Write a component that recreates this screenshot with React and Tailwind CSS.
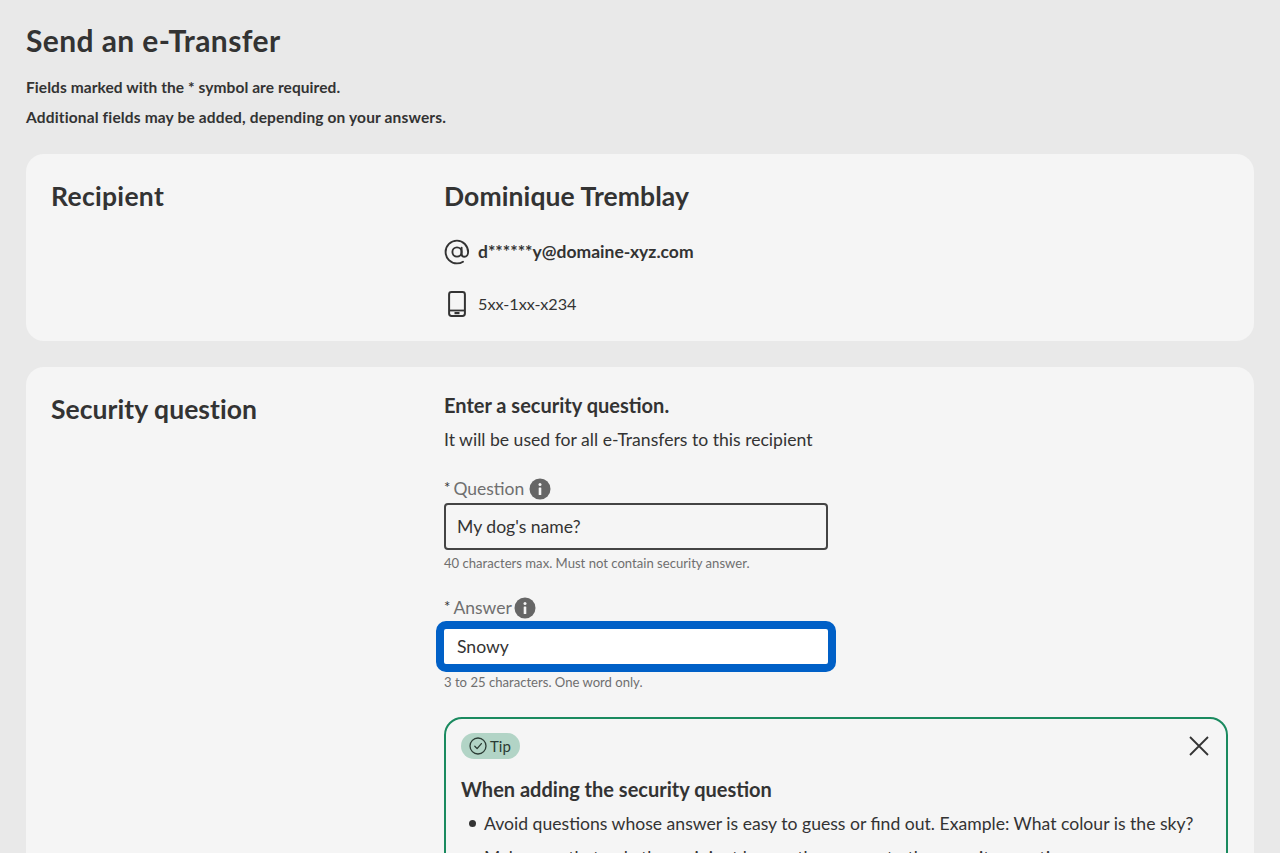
import React from 'react'

const font = { fontFamily: 'Lato, sans-serif' }

const InfoDot = () => (
  <svg width="22" height="22" viewBox="0 0 22 22" className="shrink-0">
    <circle cx="11" cy="11" r="10.5" fill="#666666" />
    <circle cx="11" cy="6.5" r="1.5" fill="#f5f5f5" />
    <rect x="9.7" y="9.5" width="2.6" height="7.5" rx="0.6" fill="#f5f5f5" />
  </svg>
)

const AtIcon = () => (
  <svg width="26" height="26" viewBox="0 0 26 26" fill="none" stroke="#333333" strokeWidth="1.9" strokeLinecap="round">
    <circle cx="13" cy="13" r="4.6" />
    <path d="M17.6 8.6v6.2c0 1.9 1.2 3 2.8 3 2.1 0 3.7-2 3.7-4.8C24.1 6.8 19.1 1.6 13 1.6 6.7 1.6 1.6 6.7 1.6 13S6.7 24.4 13 24.4c2.3 0 4.3-.6 6-1.7" />
  </svg>
)

const PhoneIcon = () => (
  <svg width="18" height="26" viewBox="0 0 18 26" fill="none">
    <rect x="1.1" y="1.1" width="15.8" height="23.8" rx="2.4" stroke="#333333" strokeWidth="2" />
    <path d="M1 19.5h16" stroke="#333333" strokeWidth="1.8" />
    <rect x="6.5" y="21" width="5" height="2.2" fill="#333333" />
  </svg>
)

const TipIcon = () => (
  <svg width="18" height="18" viewBox="0 0 18 18" fill="none" stroke="#2b3b34" strokeWidth="1.3" strokeLinecap="round" strokeLinejoin="round">
    <circle cx="9" cy="9" r="8" />
    <path d="M5.8 9.3l2.3 2.3 4.3-5" />
  </svg>
)

const CloseIcon = () => (
  <svg width="20" height="20" viewBox="0 0 20 20" fill="none" stroke="#333333" strokeWidth="1.8">
    <path d="M1 1l18 18M19 1L1 19" />
  </svg>
)

const Field = ({ label, value, hint, focused }) => (
  <div className="w-[384px]">
    <div className="flex items-center h-[22px] text-[17.5px] text-[#6f6f6f]">
      <span className="text-[#333333] mr-[3px] text-[15px] -mt-[3px]">*</span>
      <span className={focused ? 'mr-[2px]' : 'mr-[5px]'}>{label}</span>
      <InfoDot />
    </div>
    {focused ? (
      <div className="mt-[2px] -mx-[8px] border-[8px] border-[#0060c7] rounded-[10px] bg-white h-[51px] flex items-center pl-[13px] pt-[2px] text-[17.6px] text-[#333333]">
        {value}
      </div>
    ) : (
      <div className="mt-[3px] border-2 border-[#444444] rounded-[4px] h-[47px] flex items-center pl-[11px] pt-[2px] text-[17.6px] text-[#333333]">
        {value}
      </div>
    )}
    <p className={`${focused ? 'mt-[1px]' : 'mt-[4px]'} text-[13.1px] leading-[18px] text-[#6f6f6f]`}>{hint}</p>
  </div>
)

export default function App() {
  return (
    <div className="h-[853px] overflow-hidden bg-[#e9e9e9] px-[26px] text-[#333333]" style={font}>
      <h1 className="pt-[21px] text-[30px] leading-[38px] font-bold tracking-[0.4px]">Send an e-Transfer</h1>
      <p className="mt-[18px] text-[15.5px] leading-[20px] font-bold tracking-[0.07px]">Fields marked with the * symbol are required.</p>
      <p className="mt-[10px] text-[15.5px] leading-[20px] font-bold tracking-[0.15px]">Additional fields may be added, depending on your answers.</p>

      <section className="mt-[27px] h-[187px] bg-[#f5f5f5] rounded-[18px] flex px-[26px] pt-[25px]">
        <h2 className="w-[392px] -ml-px text-[26.5px] leading-[34px] font-bold tracking-[0.3px]">Recipient</h2>
        <div className="ml-px">
          <h3 className="text-[26.5px] leading-[34px] font-bold tracking-[0.1px]">Dominique Tremblay</h3>
          <div className="mt-[26px] flex items-center gap-[8px] h-[26px]">
            <AtIcon />
            <span className="text-[17.5px] font-bold">d******y@domaine-xyz.com</span>
          </div>
          <div className="mt-[26px] flex items-center h-[26px]">
            <span className="w-[34px] pl-[4px] flex"><PhoneIcon /></span>
            <span className="text-[16.2px]">5xx-1xx-x234</span>
          </div>
        </div>
      </section>

      <section className="mt-[26px] bg-[#f5f5f5] rounded-t-[18px] flex px-[26px] pt-[25px] pb-[40px]">
        <h2 className="w-[392px] shrink-0 -ml-px text-[26.5px] leading-[34px] font-bold tracking-[0.05px]">Security question</h2>
        <div className="flex-1 ml-px">
          <h3 className="mt-[1px] text-[20px] leading-[24px] font-bold">Enter a security question.</h3>
          <p className="mt-[11px] text-[17.6px] leading-[24px]">It will be used for all e-Transfers to this recipient</p>

          <div className="mt-[26px]">
            <Field label="Question" value="My dog's name?" hint="40 characters max. Must not contain security answer." />
          </div>
          <div className="mt-[25px]">
            <Field label="Answer" value="Snowy" hint="3 to 25 characters. One word only." focused />
          </div>

          <div className="mt-[26px] border-2 border-[#1a8a5f] rounded-[18px] px-[15px] pt-[14px] pb-[20px]">
            <div className="flex justify-between items-start">
              <span className="inline-flex items-center gap-[3px] h-[26px] pl-[8px] pr-[9px] rounded-full bg-[#b2d4c6] text-[15px] text-[#2b3b34]">
                <TipIcon />
                Tip
              </span>
              <button className="mt-[3px] mr-[2px]"><CloseIcon /></button>
            </div>
            <h4 className="mt-[17px] text-[20px] leading-[26px] font-bold">When adding the security question</h4>
            <ul className="mt-[10px] pl-[8px] text-[17.6px] leading-[24px]">
              <li className="flex items-start gap-[8px]">
                <span className="mt-[8px] w-[7px] h-[7px] rounded-full bg-[#333333] shrink-0" />
                Avoid questions whose answer is easy to guess or find out. Example: What colour is the sky?
              </li>
              <li className="mt-[10px] flex items-start gap-[8px]">
                <span className="mt-[8px] w-[7px] h-[7px] rounded-full bg-[#333333] shrink-0" />
                Make sure that only the recipient knows the answer to the security question.
              </li>
            </ul>
          </div>
        </div>
      </section>
    </div>
  )
}
